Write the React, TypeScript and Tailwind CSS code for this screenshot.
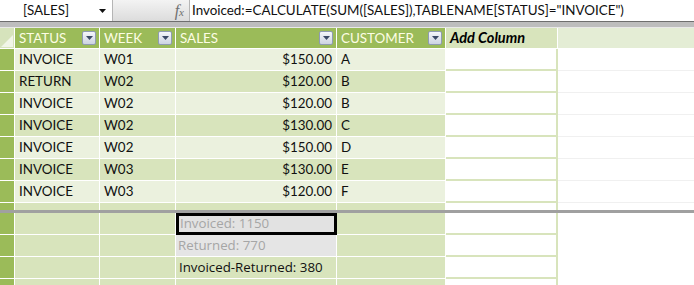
import React from "react";

const cols = "grid-cols-[15px_85px_76px_161px_109px_112px_1fr]";

const rows = [
  ["INVOICE", "W01", "$150.00", "A"],
  ["RETURN", "W02", "$120.00", "B"],
  ["INVOICE", "W02", "$120.00", "B"],
  ["INVOICE", "W02", "$130.00", "C"],
  ["INVOICE", "W02", "$150.00", "D"],
  ["INVOICE", "W03", "$130.00", "E"],
  ["INVOICE", "W03", "$120.00", "F"],
];

function FilterButton() {
  return (
    <div className="absolute right-[3px] top-[3px] w-[14px] h-[14px] border border-[#8f9bb3] rounded-[2px] bg-gradient-to-b from-[#f4f6fa] to-[#cdd4e2] flex items-center justify-center">
      <svg width="7" height="4" viewBox="0 0 7 4">
        <path d="M0 0h7L3.5 4z" fill="#3b4a66" />
      </svg>
    </div>
  );
}

function HeaderCell({ label }: { label: string }) {
  return (
    <div className="relative h-full border-r border-white bg-[#9bbb59] pl-[4px] text-[#fdfde4] leading-[20px]">
      {label}
      <FilterButton />
    </div>
  );
}

export default function App() {
  return (
    <div
      className="w-[694px] h-[285px] overflow-hidden bg-white text-[13.4px] text-[#111]"
      style={{ fontFamily: "Lato, 'Open Sans', sans-serif" }}
    >
      {/* formula bar */}
      <div className="flex h-[22px] border-b border-[#6e6e6e]">
        <div className="relative w-[113px] bg-white border-r border-[#b5b5b5] pl-[23px] leading-[20px]">
          [SALES]
          <svg className="absolute right-[6px] top-[9px]" width="7" height="4" viewBox="0 0 7 4">
            <path d="M0 0h7L3.5 4z" fill="#111" />
          </svg>
        </div>
        <div className="w-[77px] bg-gradient-to-b from-[#f3f3f3] to-[#dcdcdc] border-r border-[#b5b5b5] flex justify-end items-center pr-[5px]">
          <span
            className="italic text-[#6f6f6f] text-[16px] leading-none"
            style={{ fontFamily: "'Liberation Serif', serif" }}
          >
            f<span className="text-[11px]">x</span>
          </span>
        </div>
        <div className="flex-1 pl-[2px] leading-[20px] whitespace-nowrap">
          Invoiced:=CALCULATE(SUM([SALES]),TABLENAME[STATUS]="INVOICE")
        </div>
      </div>
      <div className="h-[6px] bg-[#bdbdbd] border-b border-[#e9e9e9]" />

      {/* header row */}
      <div className={`grid ${cols} h-[21px] border-b border-white`}>
        <div className="relative bg-[#d6e3bc] border-r border-white overflow-hidden">
          <svg className="absolute right-[1px] bottom-[1px]" width="12" height="12" viewBox="0 0 12 12">
            <path d="M12 0V12H0z" fill="#f1f5e8" />
          </svg>
        </div>
        <HeaderCell label="STATUS" />
        <HeaderCell label="WEEK" />
        <HeaderCell label="SALES" />
        <HeaderCell label="CUSTOMER" />
        <div className="bg-[#d8e4bc] border-r border-white pl-[4px] text-[14.5px] text-black font-bold italic leading-[20px]">
          Add Column
        </div>
        <div className="bg-[#e4edd5]" />
      </div>

      {/* upper pane */}
      <div className="h-[161px] overflow-hidden">
        {[...rows, ["", "", "", ""]].map((r, i) => {
          const bg = i % 2 === 0 ? "bg-[#ebf1de]" : "bg-[#d8e4bc]";
          return (
            <div key={i} className={`grid ${cols} h-[22px] leading-[21px]`}>
              <div className="bg-[#9bbb59] border-r border-b border-white" />
              <div className={`${bg} border-r border-b border-white pl-[4px]`}>{r[0]}</div>
              <div className={`${bg} border-r border-b border-white pl-[4px]`}>{r[1]}</div>
              <div className={`${bg} border-r border-b border-white pr-[4px] text-right`}>{r[2]}</div>
              <div className={`${bg} border-r border-b border-white pl-[4px]`}>{r[3]}</div>
              <div className="bg-white border-r-2 border-b-2 border-[#d8e4bc]" />
              <div className="bg-white border-b border-[#f0f0f0]" />
            </div>
          );
        })}
      </div>

      {/* split bar */}
      <div className="h-[3px] bg-[#a0a0a0]" />

      {/* lower pane */}
      <div style={{ fontFamily: "'Open Sans', 'DejaVu Sans', sans-serif" }} className="text-[13.3px]">
        {[0, 1, 2, 3].map((i) => (
          <div key={i} className={`grid ${cols} h-[22px] leading-[21px]`}>
            <div className="bg-[#9bbb59] border-r border-b border-white" />
            <div className="bg-[#d8e4bc] border-r border-b border-white" />
            <div className="bg-[#d8e4bc] border-r border-b border-white" />
            {i === 0 ? (
              <div className="bg-[#e2e2e2] border-[3px] border-black pl-[1px] leading-[15px] text-[#a6a6a6]">
                Invoiced: 1150
              </div>
            ) : i === 1 ? (
              <div className="bg-[#e5e5e5] border-r border-b border-white pl-[2px] text-[#a6a6a6]">
                Returned: 770
              </div>
            ) : i === 2 ? (
              <div className="bg-[#d8e4bc] border-r border-b border-white pl-[3px] text-[#111]">
                Invoiced-Returned: 380
              </div>
            ) : (
              <div className="bg-[#d8e4bc] border-r border-b border-white" />
            )}
            <div className="bg-[#d8e4bc] border-r border-b border-white" />
            <div className="bg-white border-r-2 border-b-2 border-[#d8e4bc]" />
            <div className="bg-white" />
          </div>
        ))}
      </div>
    </div>
  );
}
